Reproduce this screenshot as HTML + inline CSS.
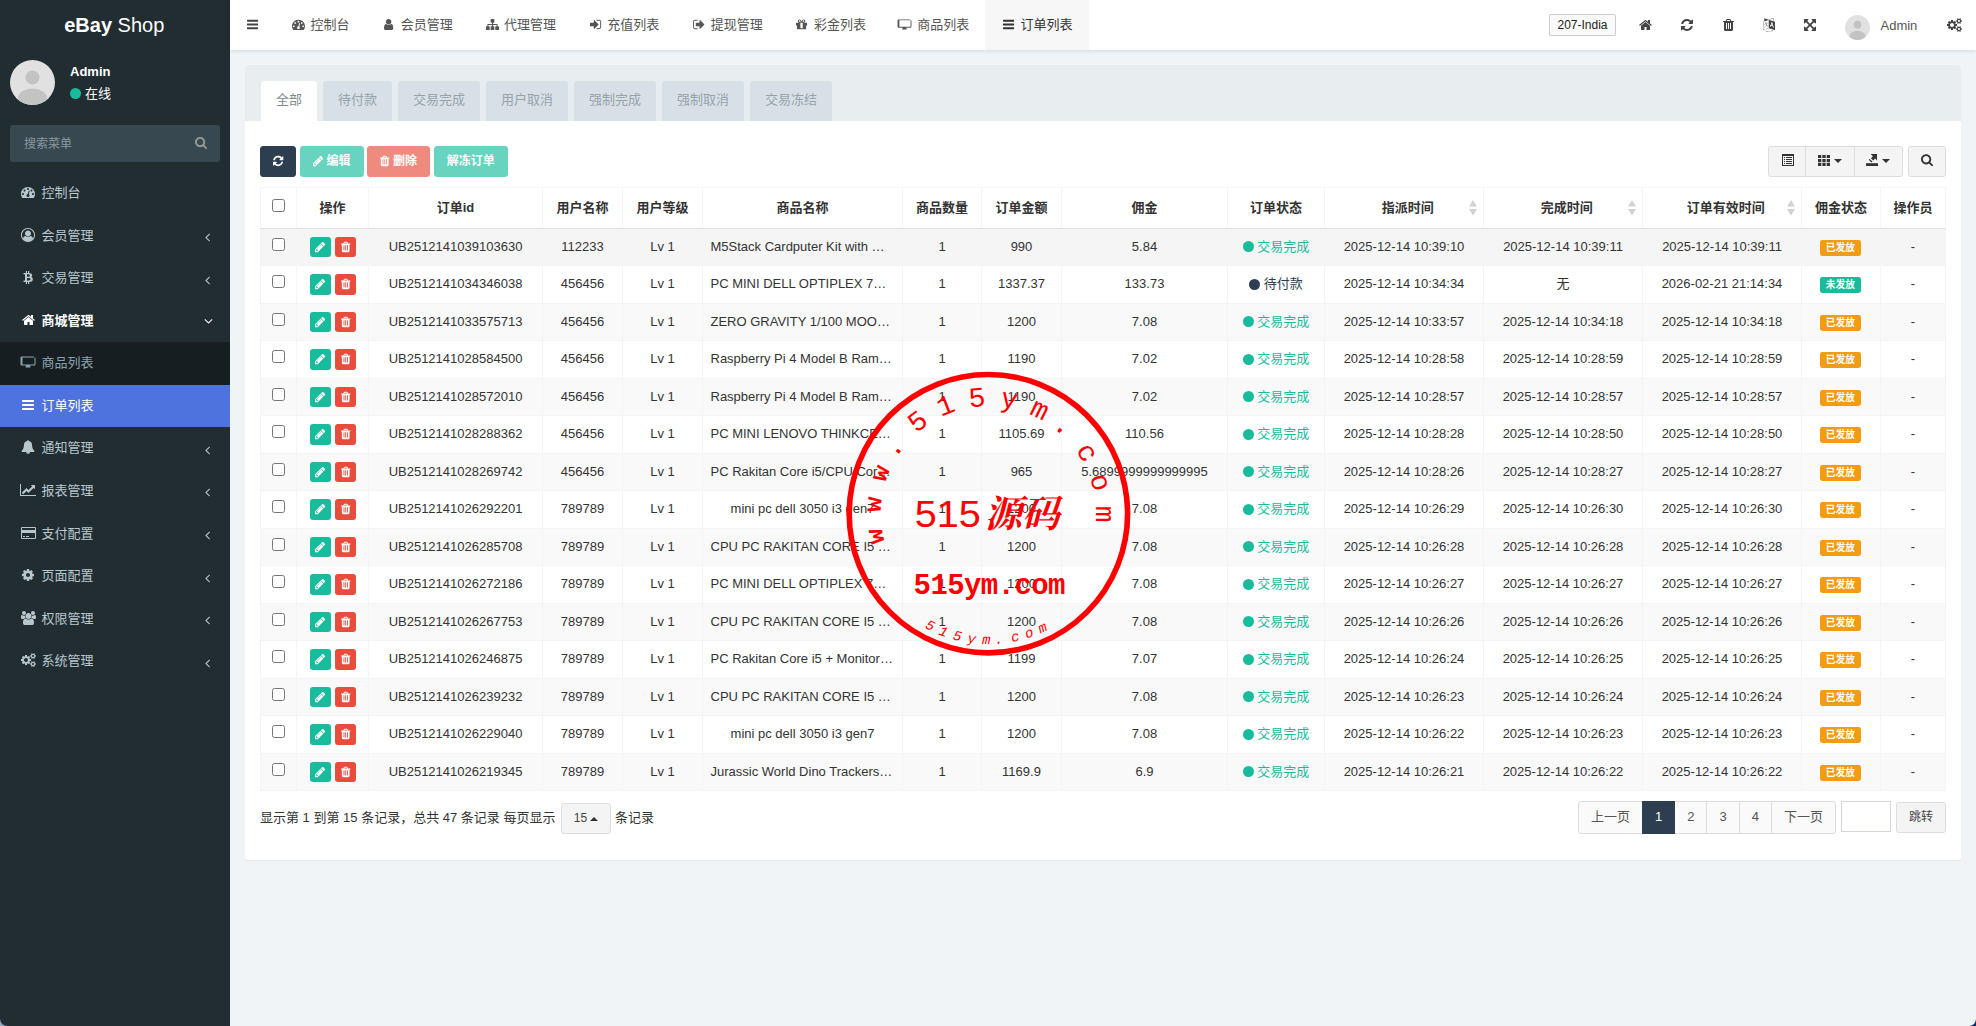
<!DOCTYPE html><html lang="zh-CN"><head><meta charset="utf-8"><title>eBay Shop</title><style>
*{box-sizing:border-box}
html,body{margin:0;padding:0}
body{width:1976px;height:1026px;overflow:hidden;position:relative;background:#f1f4f6;
 font-family:"Liberation Sans","Noto Sans CJK SC",sans-serif;font-size:13px;line-height:1.42857;color:#333}
svg.fa{display:inline-block;vertical-align:-0.1429em;fill:currentColor;overflow:visible}
a{text-decoration:none;color:inherit}
ul{list-style:none;margin:0;padding:0}
/* sidebar */
#side{position:absolute;left:0;top:0;width:230px;height:1026px;background:#222d32;color:#b8c7ce}
#logo{height:50px;line-height:50px;text-align:center;text-indent:-1.5px;font-size:20px;color:#fff;background:#222d32}
#logo b{font-weight:bold}
#upanel{position:absolute;left:0;top:50px;width:230px;height:65px}
#upanel .av{position:absolute;left:10px;top:10px;width:45px;height:45px;border-radius:50%;overflow:hidden}
#upanel .nm{position:absolute;left:70px;top:12.7px;font-weight:bold;color:#fff;font-size:13px;line-height:18px}
#upanel .st{position:absolute;left:70px;top:34.7px;color:#fff;font-size:13px;line-height:18px;white-space:nowrap}
#upanel .st i{display:inline-block;width:11px;height:11px;border-radius:50%;background:#18bc9c;vertical-align:-1px;margin-right:4px}
#sform{position:absolute;left:10px;top:125px;width:210px;height:37px;background:#374850;border-radius:3px;color:#8b979d;font-size:12px;line-height:39px;padding-left:14px}
#sform svg{position:absolute;left:184.5px;top:11px;fill:#999}
#menu{position:absolute;left:0;top:172px;width:230px}
#menu li{position:relative;height:42.57px;line-height:42.57px;white-space:nowrap}
#menu li .ic{position:absolute;left:18px;top:0;width:20px;text-align:center;height:42.57px}
#menu li .ic svg{vertical-align:-2px}
#menu li .tx{position:absolute;left:41.6px;top:0}
#menu li .ar{position:absolute;right:20.5px;top:2.6px}
#menu li.open{color:#fff;font-weight:bold}
#menu li.sub{background:#171e21;color:#8aa4af}
#menu li.act{background:#4e73df;color:#fff}
/* header */
#head{position:absolute;left:230px;top:0;width:1746px;height:50px;background:#fff;box-shadow:0 1px 4px rgba(0,21,41,.12);color:#555}
#head .tg{position:absolute;left:17px;top:0;height:50px;line-height:50px;color:#444}
#tabs{position:absolute;left:45.1px;top:0;height:50px;white-space:nowrap;display:flex}
#tabs a{display:block;height:50px;line-height:50px;padding:0 16px 0 15px;color:#555;white-space:nowrap}
#tabs a .ib{display:inline-block;width:16.71px;text-align:center;margin-right:3.6px}
#tabs a.on{background:#f7f7f7;color:#333}
#head .hi{position:absolute;top:1px;height:50px;line-height:50px;color:#444}
#country{position:absolute;left:1319px;top:14px;width:67px;height:22px;border:1px solid #ccc;border-radius:2px;background:#fafafa;font-size:12px;line-height:20px;text-align:center;color:#222}
#hav{position:absolute;left:1615px;top:15px;width:25px;height:25px;border-radius:50%;overflow:hidden}
#hname{position:absolute;left:1650.5px;top:0.7px;line-height:50px;color:#555}
/* content */
#panel{position:absolute;left:245px;top:65px;width:1716px;height:795px;background:#fff;border-radius:3px;box-shadow:0 1px 1px rgba(0,0,0,.05)}
#phead{position:absolute;left:0;top:0;width:1716px;height:56px;background:#e8edf0;border-radius:3px 3px 0 0}
#ptabs{position:absolute;left:16px;top:16px;display:flex}
#ptabs a{display:block;height:40px;line-height:37px;padding:0 15px;margin-right:6px;background:#d8e0e7;color:#95a3ab;border-radius:3px 3px 0 0;white-space:nowrap}
#ptabs a.on{background:#fff;color:#7b8a8b}
.btn{display:inline-block;border:1px solid transparent;border-radius:3px;padding:6px 12px;font-size:12px;line-height:17.14px;color:#fff;white-space:nowrap;vertical-align:middle}
#tb{position:absolute;left:15px;top:81px;height:31px;white-space:nowrap;font-size:0}
#tb .btn{margin-right:3.7px;height:31.14px;font-weight:bold}
.b-pri{background:#2c3e50;border-color:#2c3e50}
.b-suc{background:#18bc9c;border-color:#18bc9c}
.b-dan{background:#e74c3c;border-color:#e74c3c}
.dis{opacity:.65}
.b-def{background:#f4f4f4;border-color:#ddd;color:#444}
#rt{position:absolute;top:81.3px;left:1523.3px;height:30.3px;width:178px}
.rb{position:absolute;top:0;height:30.3px;background:#f4f4f4;border:1px solid #ddd;border-radius:3px}
.ti{position:absolute;fill:#333;margin:-1px 0 0 -1px}
.rb .caret-dn{margin:-1px 0 0 -1px !important}

#tbl{position:absolute;left:15px;top:122px;width:1686px;border-collapse:separate;border-spacing:0;table-layout:fixed;background:#fff;border-right:1px solid #f4f4f4;border-bottom:1px solid #f4f4f4}
#tbl th,#tbl td{border-left:1px solid #f4f4f4;border-top:1px solid #f4f4f4;text-align:center;padding:0 7.5px;white-space:nowrap;overflow:hidden;vertical-align:middle}
#tbl thead th{height:40.7px;font-weight:bold;color:#333;position:relative}
#tbl tbody tr{height:37.5px}
#tbl tbody td{height:37.5px;color:#333}
#tbl tbody tr:first-child td{border-top-color:#ddd}
#tbl tbody tr:nth-child(odd){background:#f9f9f9}
#tbl tbody tr.hov{background:#f5f5f5}
#tbl th.so{padding-left:15px}
#tbl th.so svg{position:absolute;right:6px;top:12px}
.cb{display:inline-block;width:13px;height:13px;border:1px solid #767676;border-radius:2.5px;background:#fff;vertical-align:middle;position:relative;top:-3px}
.xs{display:inline-block;width:21px;text-align:center;border-radius:3px;padding:0 0 0 1px;height:20.5px;line-height:18.5px;font-size:12px;vertical-align:middle;border:1px solid transparent}
.xs svg{fill:#fff;vertical-align:-2.3px}
.xs+.xs{margin-left:4px}
.dot{display:inline-block;width:11.14px;height:11.14px;border-radius:50%;vertical-align:-1.5px;margin-right:3.6px}
.suc{color:#18bc9c}.suc .dot{background:#18bc9c}
.pri{color:#2c3e50}.pri .dot{background:#2c3e50}
.lab{display:inline-block;font-size:9.75px;font-weight:bold;color:#fff;border-radius:2.4px;width:41px;text-align:center;height:15.7px;line-height:15.7px;vertical-align:middle;position:relative;top:0.6px;left:-0.6px}
.lw{background:#f39c12}.ls{background:#18bc9c}
#tbl td.nm{text-align:left}
#pinfo{position:absolute;left:15px;top:737px;height:32px;line-height:32px;white-space:nowrap;color:#333}
#pinfo .btn{height:30.4px;padding:5.6px 12px;margin:0 4px 0 5.3px;position:relative;top:0}
.caret-up{display:inline-block;width:0;height:0;border-left:4px solid transparent;border-right:4px solid transparent;border-bottom:4px solid #333;vertical-align:1px;margin-left:3px}
.caret-dn{display:inline-block;width:0;height:0;border-left:4px solid transparent;border-right:4px solid transparent;border-top:4px solid #333;vertical-align:2px;margin-left:4px}
#pg{position:absolute;left:1333px;top:736px;display:flex;height:32.57px}
#pg a{display:block;height:32.57px;line-height:30.57px;padding:0 12px;border:1px solid #ddd;margin-left:-1px;background:#fafafa;color:#555}
#pg a:first-child{margin-left:0;border-radius:3px 0 0 3px}
#pg a:last-child{border-radius:0 3px 3px 0}
#pg a.on{background:#2c3e50;border-color:#2c3e50;color:#fff;position:relative;z-index:1}
#jin{position:absolute;left:1596px;top:736.2px;width:50px;height:30.4px;border:1px solid #d2d6de;background:#fff}
#jbt{position:absolute;left:1651px;top:737.2px;width:50px;height:30.4px;border:1px solid #ddd;border-radius:3px;background:#f4f4f4;color:#444;font-size:12px;line-height:28px;text-align:center}
#cbl{position:absolute;left:0;top:1019px;width:7px;height:7px;background:radial-gradient(circle at 7px 0,rgba(140,163,184,0) 6.3px,#8ca3b8 7.3px)}
#cbr{position:absolute;left:1969px;top:1019px;width:7px;height:7px;background:radial-gradient(circle at 0 0,rgba(241,244,246,0) 5.8px,#f4f7fa 6.4px,#0d2b69 7.4px)}
#stamp{position:absolute;left:838px;top:364px;width:300px;height:300px;pointer-events:none}
</style></head><body><div id="side"><div id="logo"><b>eBay</b> Shop</div><div id="upanel"><div class="av"><svg width="45" height="45" viewBox="0 0 45 45"><rect width="45" height="45" fill="#e1e1e1"/><circle cx="22.5" cy="17.5" r="7" fill="#c3c3c3"/><ellipse cx="22.5" cy="38" rx="14.5" ry="9.5" fill="#c3c3c3"/></svg></div><div class="nm">Admin</div><div class="st"><i></i>在线</div></div><div id="sform">搜索菜单<svg class="fa" style="width:12.07px;height:13px;" viewBox="0 -1536 1664 1792"><path transform="scale(1,-1)" d="M1152 704C1152 457 951 256 704 256C457 256 256 457 256 704C256 951 457 1152 704 1152C951 1152 1152 951 1152 704ZM1664 -128C1664 -94 1650 -61 1627 -38L1284 305C1365 422 1408 562 1408 704C1408 1093 1093 1408 704 1408C315 1408 0 1093 0 704C0 315 315 0 704 0C846 0 986 43 1103 124L1446 -218C1469 -242 1502 -256 1536 -256C1606 -256 1664 -198 1664 -128Z"/></svg></div><ul id="menu"><li class=""><span class="ic"><svg class="fa" style="width:14.00px;height:14px;" viewBox="0 -1536 1792 1792"><path transform="scale(1,-1)" d="M384 384C384 313 327 256 256 256C185 256 128 313 128 384C128 455 185 512 256 512C327 512 384 455 384 384ZM576 832C576 761 519 704 448 704C377 704 320 761 320 832C320 903 377 960 448 960C519 960 576 903 576 832ZM1004 351C1069 306 1103 224 1082 143C1055 41 950 -21 847 6C745 33 683 138 710 241C732 322 801 377 880 383L981 765C990 799 1025 820 1059 811C1093 802 1113 767 1105 733ZM1664 384C1664 313 1607 256 1536 256C1465 256 1408 313 1408 384C1408 455 1465 512 1536 512C1607 512 1664 455 1664 384ZM1024 1024C1024 953 967 896 896 896C825 896 768 953 768 1024C768 1095 825 1152 896 1152C967 1152 1024 1095 1024 1024ZM1472 832C1472 761 1415 704 1344 704C1273 704 1216 761 1216 832C1216 903 1273 960 1344 960C1415 960 1472 903 1472 832ZM1792 384C1792 878 1390 1280 896 1280C402 1280 0 878 0 384C0 212 49 45 141 -99C153 -117 173 -128 195 -128H1597C1619 -128 1639 -117 1651 -99C1743 46 1792 212 1792 384Z"/></svg></span><span class="tx">控制台</span></li><li class=""><span class="ic"><svg class="fa" style="width:14.00px;height:14px;" viewBox="0 -1536 1792 1792"><path transform="scale(1,-1)" d="M896 1536C401 1536 0 1135 0 640C0 147 400 -256 896 -256C1393 -256 1792 148 1792 640C1792 1135 1391 1536 896 1536ZM1515 185C1479 364 1392 512 1209 512C1128 433 1018 384 896 384C774 384 664 433 583 512C400 512 313 364 277 185C184 313 128 470 128 640C128 1063 473 1408 896 1408C1319 1408 1664 1063 1664 640C1664 470 1608 313 1515 185ZM1280 832C1280 620 1108 448 896 448C684 448 512 620 512 832C512 1044 684 1216 896 1216C1108 1216 1280 1044 1280 832Z"/></svg></span><span class="tx">会员管理</span><span class="ar"><svg class="fa" style="width:5.00px;height:14px;" viewBox="0 -1536 640 1792"><path transform="scale(1,-1)" d="M627 992C627 1001 623 1009 617 1015L567 1065C561 1071 552 1075 544 1075C536 1075 527 1071 521 1065L55 599C49 593 45 584 45 576C45 568 49 559 55 553L521 87C527 81 536 77 544 77C552 77 561 81 567 87L617 137C623 143 627 152 627 160C627 168 623 177 617 183L224 576L617 969C623 975 627 984 627 992Z"/></svg></span></li><li class=""><span class="ic"><svg class="fa" style="width:10.00px;height:14px;" viewBox="0 -1536 1280 1792"><path transform="scale(1,-1)" d="M1167 896C1150 1078 993 1139 795 1156V1408H641V1163C601 1163 560 1162 519 1161V1408H365V1156C332 1155 299 1155 268 1155L56 1156V992C169 994 167 992 167 992C230 992 250 956 256 924V637C260 637 266 637 272 636C267 636 261 636 256 636V234C253 214 241 183 198 183C198 183 200 181 87 183L56 0H256C293 0 329 -1 365 -1V-256H519V-4C561 -5 602 -5 641 -5V-256H795V-1C1053 13 1233 78 1256 321C1274 516 1182 603 1036 638C1124 683 1180 763 1167 896ZM952 351C952 160 626 182 522 182V520C626 520 952 549 952 351ZM881 827C881 654 609 674 522 674V981C609 981 881 1008 881 827Z"/></svg></span><span class="tx">交易管理</span><span class="ar"><svg class="fa" style="width:5.00px;height:14px;" viewBox="0 -1536 640 1792"><path transform="scale(1,-1)" d="M627 992C627 1001 623 1009 617 1015L567 1065C561 1071 552 1075 544 1075C536 1075 527 1071 521 1065L55 599C49 593 45 584 45 576C45 568 49 559 55 553L521 87C527 81 536 77 544 77C552 77 561 81 567 87L617 137C623 143 627 152 627 160C627 168 623 177 617 183L224 576L617 969C623 975 627 984 627 992Z"/></svg></span></li><li class="open"><span class="ic"><svg class="fa" style="width:13.00px;height:14px;" viewBox="0 -1536 1664 1792"><path transform="scale(1,-1)" d="M1408 544C1408 546 1408 548 1407 550L832 1024L257 550C257 548 256 546 256 544V64C256 29 285 0 320 0H704V384H960V0H1344C1379 0 1408 29 1408 64ZM1631 613C1642 626 1640 647 1627 658L1408 840V1248C1408 1266 1394 1280 1376 1280H1184C1166 1280 1152 1266 1152 1248V1053L908 1257C866 1292 798 1292 756 1257L37 658C24 647 22 626 33 613L95 539C100 533 108 529 116 528C125 527 133 530 140 535L832 1112L1524 535C1530 530 1537 528 1545 528C1546 528 1547 528 1548 528C1556 529 1564 533 1569 539L1631 613Z"/></svg></span><span class="tx">商城管理</span><span class="ar" style="right:17.5px;top:1.6px"><svg class="fa" style="width:9.00px;height:14px;" viewBox="0 -1536 1152 1792"><path transform="scale(1,-1)" d="M1075 800C1075 808 1071 817 1065 823L1015 873C1009 879 1000 883 992 883C984 883 975 879 969 873L576 480L183 873C177 879 168 883 160 883C151 883 143 879 137 873L87 823C81 817 77 808 77 800C77 792 81 783 87 777L553 311C559 305 568 301 576 301C584 301 593 305 599 311L1065 777C1071 783 1075 792 1075 800Z"/></svg></span></li><li class="sub"><span class="ic"><svg class="fa" style="width:15.00px;height:14px;" viewBox="0 -1536 1920 1792"><path transform="translate(0,-1344)" d="M1728 992v-832q0-13-9.5-22.5t-22.5-9.5h-1472q-13 0-22.5 9.5t-9.5 22.5v832q0 13 9.5 22.5t22.5 9.5h1472q13 0 22.5-9.5t9.5-22.5zM1856 160v832q0 66-47 113t-113 47h-544q0 37 16 77.5t32 71 16 43.5q0 26-19 45t-45 19h-512q-26 0-45-19t-19-45q0-14 16-44t32-70 16-78h-544q-66 0-113-47t-47-113v-832q0-66 47-113t113-47h1472q66 0 113 47t47 113z"/></svg></span><span class="tx">商品列表</span></li><li class="act"><span class="ic"><svg class="fa" style="width:12.00px;height:14px;" viewBox="0 -1536 1536 1792"><path transform="scale(1,-1)" d="M1536 192C1536 227 1507 256 1472 256H64C29 256 0 227 0 192V64C0 29 29 0 64 0H1472C1507 0 1536 29 1536 64ZM1536 704C1536 739 1507 768 1472 768H64C29 768 0 739 0 704V576C0 541 29 512 64 512H1472C1507 512 1536 541 1536 576ZM1536 1216C1536 1251 1507 1280 1472 1280H64C29 1280 0 1251 0 1216V1088C0 1053 29 1024 64 1024H1472C1507 1024 1536 1053 1536 1088Z"/></svg></span><span class="tx">订单列表</span></li><li class=""><span class="ic"><svg class="fa" style="width:14.00px;height:14px;" viewBox="0 -1536 1792 1792"><path transform="scale(1,-1)" d="M912 -160C912 -169 905 -176 896 -176C799 -176 720 -97 720 0C720 9 727 16 736 16C745 16 752 9 752 0C752 -79 817 -144 896 -144C905 -144 912 -151 912 -160ZM1728 128C1580 253 1408 477 1408 960C1408 1152 1249 1362 984 1401C989 1413 992 1426 992 1440C992 1493 949 1536 896 1536C843 1536 800 1493 800 1440C800 1426 803 1413 808 1401C543 1362 384 1152 384 960C384 477 212 253 64 128C64 58 122 0 192 0H640C640 -141 755 -256 896 -256C1037 -256 1152 -141 1152 0H1600C1670 0 1728 58 1728 128Z"/></svg></span><span class="tx">通知管理</span><span class="ar"><svg class="fa" style="width:5.00px;height:14px;" viewBox="0 -1536 640 1792"><path transform="scale(1,-1)" d="M627 992C627 1001 623 1009 617 1015L567 1065C561 1071 552 1075 544 1075C536 1075 527 1071 521 1065L55 599C49 593 45 584 45 576C45 568 49 559 55 553L521 87C527 81 536 77 544 77C552 77 561 81 567 87L617 137C623 143 627 152 627 160C627 168 623 177 617 183L224 576L617 969C623 975 627 984 627 992Z"/></svg></span></li><li class=""><span class="ic"><svg class="fa" style="width:16.00px;height:14px;" viewBox="0 -1536 2048 1792"><path transform="scale(1,-1)" d="M2048 0H128V1408H0V-128H2048ZM1920 1248C1920 1266 1906 1280 1888 1280H1453C1425 1280 1410 1246 1431 1225L1552 1104L1088 640L855 873C842 886 822 886 809 873L224 288L416 96L832 512L1065 279C1078 266 1098 266 1111 279L1744 912L1865 791C1886 770 1920 785 1920 813Z"/></svg></span><span class="tx">报表管理</span><span class="ar"><svg class="fa" style="width:5.00px;height:14px;" viewBox="0 -1536 640 1792"><path transform="scale(1,-1)" d="M627 992C627 1001 623 1009 617 1015L567 1065C561 1071 552 1075 544 1075C536 1075 527 1071 521 1065L55 599C49 593 45 584 45 576C45 568 49 559 55 553L521 87C527 81 536 77 544 77C552 77 561 81 567 87L617 137C623 143 627 152 627 160C627 168 623 177 617 183L224 576L617 969C623 975 627 984 627 992Z"/></svg></span></li><li class=""><span class="ic"><svg class="fa" style="width:15.00px;height:14px;" viewBox="0 -1536 1920 1792"><path transform="scale(1,-1)" d="M1760 1408H160C72 1408 0 1336 0 1248V32C0 -56 72 -128 160 -128H1760C1848 -128 1920 -56 1920 32V1248C1920 1336 1848 1408 1760 1408ZM160 1280H1760C1777 1280 1792 1265 1792 1248V1024H128V1248C128 1265 143 1280 160 1280ZM1760 0H160C143 0 128 15 128 32V640H1792V32C1792 15 1777 0 1760 0ZM256 128H512V256H256ZM640 128H1024V256H640Z"/></svg></span><span class="tx">支付配置</span><span class="ar"><svg class="fa" style="width:5.00px;height:14px;" viewBox="0 -1536 640 1792"><path transform="scale(1,-1)" d="M627 992C627 1001 623 1009 617 1015L567 1065C561 1071 552 1075 544 1075C536 1075 527 1071 521 1065L55 599C49 593 45 584 45 576C45 568 49 559 55 553L521 87C527 81 536 77 544 77C552 77 561 81 567 87L617 137C623 143 627 152 627 160C627 168 623 177 617 183L224 576L617 969C623 975 627 984 627 992Z"/></svg></span></li><li class=""><span class="ic"><svg class="fa" style="width:12.00px;height:14px;" viewBox="0 -1536 1536 1792"><path transform="scale(1,-1)" d="M1024 640C1024 499 909 384 768 384C627 384 512 499 512 640C512 781 627 896 768 896C909 896 1024 781 1024 640ZM1536 749C1536 766 1524 782 1507 785L1324 813C1314 846 1300 879 1283 911C1317 958 1354 1002 1388 1048C1393 1055 1396 1062 1396 1071C1396 1079 1394 1087 1389 1093C1347 1152 1277 1214 1224 1263C1217 1269 1208 1273 1199 1273C1190 1273 1181 1270 1175 1264L1033 1157C1004 1172 974 1184 943 1194L915 1378C913 1395 897 1408 879 1408H657C639 1408 625 1396 621 1380C605 1320 599 1255 592 1194C561 1184 530 1171 501 1156L363 1263C355 1269 346 1273 337 1273C303 1273 168 1127 144 1094C139 1087 135 1080 135 1071C135 1062 139 1054 145 1047C182 1002 218 957 252 909C236 879 223 849 213 817L27 789C12 786 0 768 0 753V531C0 514 12 498 29 495L212 468C222 434 236 401 253 369C219 322 182 278 148 232C143 225 140 218 140 209C140 201 142 193 147 186C189 128 259 66 312 18C319 11 328 7 337 7C346 7 355 10 362 16L503 123C532 108 562 96 593 86L621 -98C623 -115 639 -128 657 -128H879C897 -128 911 -116 915 -100C931 -40 937 25 944 86C975 96 1006 109 1035 124L1173 16C1181 11 1190 7 1199 7C1233 7 1368 154 1392 186C1398 193 1401 200 1401 209C1401 218 1397 227 1391 234C1354 279 1318 323 1284 372C1300 401 1312 431 1323 463L1508 491C1524 494 1536 512 1536 527Z"/></svg></span><span class="tx">页面配置</span><span class="ar"><svg class="fa" style="width:5.00px;height:14px;" viewBox="0 -1536 640 1792"><path transform="scale(1,-1)" d="M627 992C627 1001 623 1009 617 1015L567 1065C561 1071 552 1075 544 1075C536 1075 527 1071 521 1065L55 599C49 593 45 584 45 576C45 568 49 559 55 553L521 87C527 81 536 77 544 77C552 77 561 81 567 87L617 137C623 143 627 152 627 160C627 168 623 177 617 183L224 576L617 969C623 975 627 984 627 992Z"/></svg></span></li><li class=""><span class="ic"><svg class="fa" style="width:15.00px;height:14px;" viewBox="0 -1536 1920 1792"><path transform="scale(1,-1)" d="M593 640C541 715 512 805 512 896C512 918 514 940 517 962C474 947 430 939 384 939C249 939 145 1024 124 1024C-3 1024 0 752 0 671C0 560 94 512 194 512H328C395 592 489 637 593 640ZM1664 3C1664 229 1611 576 1318 576C1284 576 1160 437 960 437C760 437 636 576 602 576C309 576 256 229 256 3C256 -159 363 -256 523 -256H1397C1557 -256 1664 -159 1664 3ZM640 1280C640 1421 525 1536 384 1536C243 1536 128 1421 128 1280C128 1139 243 1024 384 1024C525 1024 640 1139 640 1280ZM1344 896C1344 1108 1172 1280 960 1280C748 1280 576 1108 576 896C576 684 748 512 960 512C1172 512 1344 684 1344 896ZM1920 671C1920 752 1923 1024 1796 1024C1775 1024 1671 939 1536 939C1490 939 1446 947 1403 962C1406 940 1408 918 1408 896C1408 805 1379 715 1327 640C1431 637 1525 592 1592 512H1726C1826 512 1920 560 1920 671ZM1792 1280C1792 1421 1677 1536 1536 1536C1395 1536 1280 1421 1280 1280C1280 1139 1395 1024 1536 1024C1677 1024 1792 1139 1792 1280Z"/></svg></span><span class="tx">权限管理</span><span class="ar"><svg class="fa" style="width:5.00px;height:14px;" viewBox="0 -1536 640 1792"><path transform="scale(1,-1)" d="M627 992C627 1001 623 1009 617 1015L567 1065C561 1071 552 1075 544 1075C536 1075 527 1071 521 1065L55 599C49 593 45 584 45 576C45 568 49 559 55 553L521 87C527 81 536 77 544 77C552 77 561 81 567 87L617 137C623 143 627 152 627 160C627 168 623 177 617 183L224 576L617 969C623 975 627 984 627 992Z"/></svg></span></li><li class=""><span class="ic"><svg class="fa" style="width:15.00px;height:14px;" viewBox="0 -1536 1920 1792"><path transform="scale(1,-1)" d="M896 640C896 499 781 384 640 384C499 384 384 499 384 640C384 781 499 896 640 896C781 896 896 781 896 640ZM1664 128C1664 58 1607 0 1536 0C1466 0 1408 57 1408 128C1408 198 1466 256 1536 256C1606 256 1664 198 1664 128ZM1664 1152C1664 1082 1607 1024 1536 1024C1466 1024 1408 1081 1408 1152C1408 1222 1466 1280 1536 1280C1606 1280 1664 1222 1664 1152ZM1280 731C1280 745 1270 758 1256 761L1104 784C1095 812 1083 839 1070 866C1098 905 1128 941 1157 980C1161 986 1164 992 1164 999C1164 1027 1046 1135 1020 1159C1014 1164 1007 1167 999 1167C992 1167 985 1165 979 1160L861 1071C837 1083 812 1094 786 1102L763 1255C761 1269 747 1280 733 1280H547C533 1280 521 1270 517 1256C504 1207 499 1152 494 1102C467 1093 442 1083 417 1070L302 1160C296 1164 289 1167 281 1167C252 1167 140 1046 120 1019C115 1013 113 1006 113 999C113 992 116 985 120 979C152 941 182 904 210 864C197 839 186 814 178 788L23 764C10 762 0 747 0 734V549C0 535 10 522 24 520L176 496C185 468 197 441 211 414C182 375 152 338 123 300C119 294 116 288 116 281C116 252 234 145 260 121C266 116 273 113 281 113C288 113 296 115 301 120L419 209C443 197 468 186 494 178L517 25C519 11 533 0 547 0H733C747 0 759 10 763 24C776 73 781 128 786 179C813 187 838 197 863 210L978 120C984 116 991 113 999 113C1028 113 1140 235 1160 262C1165 267 1167 274 1167 281C1167 289 1164 295 1160 301C1128 339 1098 376 1070 416C1083 441 1094 466 1102 492L1257 516C1270 518 1280 533 1280 546ZM1920 198C1920 213 1791 227 1771 229C1763 247 1753 265 1741 281C1750 301 1792 401 1792 419C1792 421 1791 424 1788 426C1776 433 1669 496 1664 496L1658 494C1624 460 1594 421 1566 382C1556 383 1546 384 1536 384C1526 384 1516 383 1506 382C1496 397 1421 496 1408 496C1403 496 1296 432 1284 426C1281 424 1280 421 1280 419C1280 402 1322 301 1331 281C1319 265 1309 247 1301 229C1281 227 1152 213 1152 198V58C1152 43 1281 29 1301 27C1309 8 1319 -9 1331 -25C1322 -45 1280 -146 1280 -163C1280 -165 1281 -168 1284 -170C1296 -177 1403 -241 1408 -241C1421 -241 1496 -141 1506 -126C1516 -127 1526 -128 1536 -128C1546 -128 1556 -127 1566 -126C1576 -141 1651 -241 1664 -241C1669 -241 1776 -177 1788 -170C1791 -168 1792 -166 1792 -163C1792 -145 1750 -45 1741 -25C1753 -9 1763 8 1771 27C1791 29 1920 43 1920 58ZM1920 1222C1920 1237 1791 1251 1771 1253C1763 1271 1753 1289 1741 1305C1750 1325 1792 1425 1792 1443C1792 1445 1791 1448 1788 1450C1776 1457 1669 1520 1664 1520L1658 1518C1624 1484 1594 1445 1566 1406C1556 1407 1546 1408 1536 1408C1526 1408 1516 1407 1506 1406C1496 1421 1421 1520 1408 1520C1403 1520 1296 1456 1284 1450C1281 1448 1280 1445 1280 1443C1280 1426 1322 1325 1331 1305C1319 1289 1309 1271 1301 1253C1281 1251 1152 1237 1152 1222V1082C1152 1067 1281 1053 1301 1051C1309 1032 1319 1015 1331 999C1322 979 1280 878 1280 861C1280 859 1281 856 1284 854C1296 847 1403 783 1408 783C1421 783 1496 883 1506 898C1516 897 1526 896 1536 896C1546 896 1556 897 1566 898C1576 883 1651 783 1664 783C1669 783 1776 847 1788 854C1791 856 1792 858 1792 861C1792 879 1750 979 1741 999C1753 1015 1763 1032 1771 1051C1791 1053 1920 1067 1920 1082Z"/></svg></span><span class="tx">系统管理</span><span class="ar"><svg class="fa" style="width:5.00px;height:14px;" viewBox="0 -1536 640 1792"><path transform="scale(1,-1)" d="M627 992C627 1001 623 1009 617 1015L567 1065C561 1071 552 1075 544 1075C536 1075 527 1071 521 1065L55 599C49 593 45 584 45 576C45 568 49 559 55 553L521 87C527 81 536 77 544 77C552 77 561 81 567 87L617 137C623 143 627 152 627 160C627 168 623 177 617 183L224 576L617 969C623 975 627 984 627 992Z"/></svg></span></li></ul></div><div id="head"><span class="tg"><svg class="fa" style="width:11.14px;height:13px;" viewBox="0 -1536 1536 1792"><path transform="scale(1,-1)" d="M1536 192C1536 227 1507 256 1472 256H64C29 256 0 227 0 192V64C0 29 29 0 64 0H1472C1507 0 1536 29 1536 64ZM1536 704C1536 739 1507 768 1472 768H64C29 768 0 739 0 704V576C0 541 29 512 64 512H1472C1507 512 1536 541 1536 576ZM1536 1216C1536 1251 1507 1280 1472 1280H64C29 1280 0 1251 0 1216V1088C0 1053 29 1024 64 1024H1472C1507 1024 1536 1053 1536 1088Z"/></svg></span><div id="tabs"><a><span class="ib"><svg class="fa" style="width:13.00px;height:13px;" viewBox="0 -1536 1792 1792"><path transform="scale(1,-1)" d="M384 384C384 313 327 256 256 256C185 256 128 313 128 384C128 455 185 512 256 512C327 512 384 455 384 384ZM576 832C576 761 519 704 448 704C377 704 320 761 320 832C320 903 377 960 448 960C519 960 576 903 576 832ZM1004 351C1069 306 1103 224 1082 143C1055 41 950 -21 847 6C745 33 683 138 710 241C732 322 801 377 880 383L981 765C990 799 1025 820 1059 811C1093 802 1113 767 1105 733ZM1664 384C1664 313 1607 256 1536 256C1465 256 1408 313 1408 384C1408 455 1465 512 1536 512C1607 512 1664 455 1664 384ZM1024 1024C1024 953 967 896 896 896C825 896 768 953 768 1024C768 1095 825 1152 896 1152C967 1152 1024 1095 1024 1024ZM1472 832C1472 761 1415 704 1344 704C1273 704 1216 761 1216 832C1216 903 1273 960 1344 960C1415 960 1472 903 1472 832ZM1792 384C1792 878 1390 1280 896 1280C402 1280 0 878 0 384C0 212 49 45 141 -99C153 -117 173 -128 195 -128H1597C1619 -128 1639 -117 1651 -99C1743 46 1792 212 1792 384Z"/></svg></span>控制台</a><a><span class="ib"><svg class="fa" style="width:9.29px;height:13px;" viewBox="0 -1536 1280 1792"><path transform="scale(1,-1)" d="M1280 137C1280 400 1215 704 953 704C872 625 762 576 640 576C518 576 408 625 327 704C65 704 0 400 0 137C0 -9 96 -128 213 -128H1067C1184 -128 1280 -9 1280 137ZM1024 1024C1024 1236 852 1408 640 1408C428 1408 256 1236 256 1024C256 812 428 640 640 640C852 640 1024 812 1024 1024Z"/></svg></span>会员管理</a><a><span class="ib"><svg class="fa" style="width:13.00px;height:13px;" viewBox="0 -1536 1792 1792"><path transform="scale(1,-1)" d="M1792 288C1792 341 1749 384 1696 384H1600V576C1600 646 1542 704 1472 704H960V896H1056C1109 896 1152 939 1152 992V1312C1152 1365 1109 1408 1056 1408H736C683 1408 640 1365 640 1312V992C640 939 683 896 736 896H832V704H320C250 704 192 646 192 576V384H96C43 384 0 341 0 288V-32C0 -85 43 -128 96 -128H416C469 -128 512 -85 512 -32V288C512 341 469 384 416 384H320V576H832V384H736C683 384 640 341 640 288V-32C640 -85 683 -128 736 -128H1056C1109 -128 1152 -85 1152 -32V288C1152 341 1109 384 1056 384H960V576H1472V384H1376C1323 384 1280 341 1280 288V-32C1280 -85 1323 -128 1376 -128H1696C1749 -128 1792 -85 1792 -32Z"/></svg></span>代理管理</a><a><span class="ib"><svg class="fa" style="width:11.14px;height:13px;" viewBox="0 -1536 1536 1792"><path transform="scale(1,-1)" d="M1184 640C1184 657 1177 673 1165 685L621 1229C609 1241 593 1248 576 1248C541 1248 512 1219 512 1184V896H64C29 896 0 867 0 832V448C0 413 29 384 64 384H512V96C512 61 541 32 576 32C593 32 609 39 621 51L1165 595C1177 607 1184 623 1184 640ZM1536 992C1536 1151 1407 1280 1248 1280H928C883 1280 896 1212 896 1184C896 1147 935 1152 960 1152H1248C1336 1152 1408 1080 1408 992V288C1408 200 1336 128 1248 128H928C883 128 896 60 896 32C896 15 911 0 928 0H1248C1407 0 1536 129 1536 288Z"/></svg></span>充值列表</a><a><span class="ib"><svg class="fa" style="width:12.07px;height:13px;" viewBox="0 -1536 1664 1792"><path transform="scale(1,-1)" d="M640 96C640 133 601 128 576 128H288C200 128 128 200 128 288V992C128 1080 200 1152 288 1152H608C653 1152 640 1220 640 1248C640 1265 625 1280 608 1280H288C129 1280 0 1151 0 992V288C0 129 129 0 288 0H608C653 0 640 68 640 96ZM1568 640C1568 657 1561 673 1549 685L1005 1229C993 1241 977 1248 960 1248C925 1248 896 1219 896 1184V896H448C413 896 384 867 384 832V448C384 413 413 384 448 384H896V96C896 61 925 32 960 32C977 32 993 39 1005 51L1549 595C1561 607 1568 623 1568 640Z"/></svg></span>提现管理</a><a><span class="ib"><svg class="fa" style="width:11.14px;height:13px;" viewBox="0 -1536 1536 1792"><path transform="scale(1,-1)" d="M928 180C928 145 899 128 864 128H672C637 128 608 145 608 180V236V704V896H928V704V236V180ZM472 1024C419 1024 376 1067 376 1120C376 1173 419 1216 472 1216C506 1216 530 1198 541 1185L667 1024ZM1160 1120C1160 1067 1117 1024 1064 1024H870L995 1185C1006 1198 1030 1216 1064 1216C1117 1216 1160 1173 1160 1120ZM1536 864C1536 882 1522 896 1504 896H1064C1188 896 1288 996 1288 1120C1288 1244 1188 1344 1064 1344C997 1344 935 1316 896 1267L768 1102L640 1267C601 1316 539 1344 472 1344C348 1344 248 1244 248 1120C248 996 348 896 472 896H32C14 896 0 882 0 864V544C0 526 14 512 32 512H128V96C128 43 171 0 224 0H1312C1365 0 1408 43 1408 96V512H1504C1522 512 1536 526 1536 544Z"/></svg></span>彩金列表</a><a><span class="ib"><svg class="fa" style="width:13.93px;height:13px;" viewBox="0 -1536 1920 1792"><path transform="translate(0,-1344)" d="M1728 992v-832q0-13-9.5-22.5t-22.5-9.5h-1472q-13 0-22.5 9.5t-9.5 22.5v832q0 13 9.5 22.5t22.5 9.5h1472q13 0 22.5-9.5t9.5-22.5zM1856 160v832q0 66-47 113t-113 47h-544q0 37 16 77.5t32 71 16 43.5q0 26-19 45t-45 19h-512q-26 0-45-19t-19-45q0-14 16-44t32-70 16-78h-544q-66 0-113-47t-47-113v-832q0-66 47-113t113-47h1472q66 0 113 47t47 113z"/></svg></span>商品列表</a><a class="on"><span class="ib"><svg class="fa" style="width:11.14px;height:13px;" viewBox="0 -1536 1536 1792"><path transform="scale(1,-1)" d="M1536 192C1536 227 1507 256 1472 256H64C29 256 0 227 0 192V64C0 29 29 0 64 0H1472C1507 0 1536 29 1536 64ZM1536 704C1536 739 1507 768 1472 768H64C29 768 0 739 0 704V576C0 541 29 512 64 512H1472C1507 512 1536 541 1536 576ZM1536 1216C1536 1251 1507 1280 1472 1280H64C29 1280 0 1251 0 1216V1088C0 1053 29 1024 64 1024H1472C1507 1024 1536 1053 1536 1088Z"/></svg></span>订单列表</a></div><div id="country">207-India</div><span class="hi" style="left:1408.9px"><svg class="fa" style="width:13.00px;height:14px;" viewBox="0 -1536 1664 1792"><path transform="scale(1,-1)" d="M1408 544C1408 546 1408 548 1407 550L832 1024L257 550C257 548 256 546 256 544V64C256 29 285 0 320 0H704V384H960V0H1344C1379 0 1408 29 1408 64ZM1631 613C1642 626 1640 647 1627 658L1408 840V1248C1408 1266 1394 1280 1376 1280H1184C1166 1280 1152 1266 1152 1248V1053L908 1257C866 1292 798 1292 756 1257L37 658C24 647 22 626 33 613L95 539C100 533 108 529 116 528C125 527 133 530 140 535L832 1112L1524 535C1530 530 1537 528 1545 528C1546 528 1547 528 1548 528C1556 529 1564 533 1569 539L1631 613Z"/></svg></span><span class="hi" style="left:1451.1px"><svg class="fa" style="width:12.00px;height:14px;" viewBox="0 -1536 1536 1792"><path transform="scale(1,-1)" d="M1511 480C1511 497 1497 512 1479 512H1287C1272 512 1262 503 1257 489C1240 449 1228 411 1204 372C1111 220 946 128 768 128C639 128 514 178 420 266L557 403C569 415 576 431 576 448C576 483 547 512 512 512H64C29 512 0 483 0 448V0C0 -35 29 -64 64 -64C81 -64 97 -57 109 -45L238 84C380 -51 569 -128 764 -128C1133 -128 1425 119 1510 473C1511 475 1511 478 1511 480ZM1536 1280C1536 1315 1507 1344 1472 1344C1455 1344 1439 1337 1427 1325L1297 1196C1155 1330 964 1408 768 1408C399 1408 104 1162 18 807C18 805 18 802 18 800C18 783 32 768 50 768H249C264 768 274 777 279 791C296 831 308 869 332 908C425 1060 590 1152 768 1152C897 1152 1022 1103 1117 1015L979 877C967 865 960 849 960 832C960 797 989 768 1024 768H1472C1507 768 1536 797 1536 832Z"/></svg></span><span class="hi" style="left:1492.9px"><svg class="fa" style="width:11.00px;height:14px;" viewBox="0 -1536 1408 1792"><path transform="scale(1,-1)" d="M512 160C512 142 498 128 480 128H416C398 128 384 142 384 160V864C384 882 398 896 416 896H480C498 896 512 882 512 864V160ZM768 160C768 142 754 128 736 128H672C654 128 640 142 640 160V864C640 882 654 896 672 896H736C754 896 768 882 768 864V160ZM1024 160C1024 142 1010 128 992 128H928C910 128 896 142 896 160V864C896 882 910 896 928 896H992C1010 896 1024 882 1024 864V160ZM480 1152 529 1269C532 1273 540 1279 546 1280H863C868 1279 877 1273 880 1269L928 1152ZM1408 1120C1408 1138 1394 1152 1376 1152H1067L997 1319C977 1368 917 1408 864 1408H544C491 1408 431 1368 411 1319L341 1152H32C14 1152 0 1138 0 1120V1056C0 1038 14 1024 32 1024H128V72C128 -38 200 -128 288 -128H1120C1208 -128 1280 -34 1280 76V1024H1376C1394 1024 1408 1038 1408 1056Z"/></svg></span><span class="hi" style="left:1532.6px"><svg class="fa" style="width:12.00px;height:14px;" viewBox="0 -1536 1536 1792"><path transform="scale(1,-1)" d="M654 458C656 466 645 512 639 514C633 516 514 566 497 574C483 581 449 595 433 602C478 672 506 725 510 733C517 748 565 842 566 847C567 853 568 875 567 880C566 885 549 875 525 867C501 859 456 829 438 826C421 822 365 801 336 791C307 781 253 765 231 759C209 753 189 752 177 748C178 731 182 725 182 725C185 720 197 707 210 704C224 700 247 701 257 704C268 706 286 715 288 719C290 723 287 735 291 739C295 742 350 755 370 761C391 768 470 795 480 794C477 782 414 656 393 618C373 580 254 414 229 385C209 362 163 305 147 293C151 291 180 294 185 297C218 318 272 386 290 407C342 468 388 533 424 588C431 585 488 538 503 528C518 518 577 485 590 479C603 474 652 451 654 458ZM449 944C446 957 438 961 428 961C418 960 388 952 373 947C359 943 328 934 315 931C302 928 273 932 269 936C265 940 274 905 286 892C308 870 326 867 335 866C355 866 380 872 395 878C410 884 435 897 445 916C447 920 452 927 449 944ZM1147 815 1071 630 1210 588ZM39 15V1046L733 1279V247ZM1280 332 1243 467 1032 532 987 422 885 453 1101 989 1201 958 1382 301ZM777 1294 1350 1490V1110ZM1088 -29 1131 -102C1100 -119 1071 -138 1038 -153C924 -202 839 -218 714 -218C613 -218 487 -177 397 -132C384 -126 337 -97 328 -97C318 -97 310 -105 310 -116C310 -123 312 -127 318 -132C402 -193 595 -256 701 -256H785C814 -256 847 -250 876 -244C971 -228 1071 -188 1152 -136L1192 -202L1246 -42ZM1536 1050 1389 1097V1515C1389 1528 1380 1536 1369 1536C1360 1536 738 1321 731 1319L173 1517V1133C88 1104 27 1084 24 1083C18 1081 10 1079 4 1072C2 1070 1 1065 0 1062V-16C0 -17 1 -18 1 -19C4 -27 11 -32 19 -32C29 -32 746 210 762 217C762 217 763 217 1536 -29Z"/></svg></span><span class="hi" style="left:1573.8px"><svg class="fa" style="width:12.00px;height:14px;" viewBox="0 -1536 1536 1792"><path transform="scale(1,-1)" d="M1283 995 1427 851C1439 839 1455 832 1472 832C1480 832 1489 834 1497 837C1520 847 1536 870 1536 896V1344C1536 1379 1507 1408 1472 1408H1024C998 1408 975 1392 965 1368C955 1345 960 1317 979 1299L1123 1155L768 800L413 1155L557 1299C576 1317 581 1345 571 1368C561 1392 538 1408 512 1408H64C29 1408 0 1379 0 1344V896C0 870 16 847 40 837C47 834 56 832 64 832C81 832 97 839 109 851L253 995L608 640L253 285L109 429C91 448 63 453 40 443C16 433 0 410 0 384V-64C0 -99 29 -128 64 -128H512C538 -128 561 -112 571 -88C581 -65 576 -37 557 -19L413 125L768 480L1123 125L979 -19C960 -37 955 -65 965 -88C975 -112 998 -128 1024 -128H1472C1507 -128 1536 -99 1536 -64V384C1536 410 1520 433 1497 443C1473 453 1445 448 1427 429L1283 285L928 640Z"/></svg></span><span class="hi" style="left:1716.7px"><svg class="fa" style="width:15.00px;height:14px;" viewBox="0 -1536 1920 1792"><path transform="scale(1,-1)" d="M896 640C896 499 781 384 640 384C499 384 384 499 384 640C384 781 499 896 640 896C781 896 896 781 896 640ZM1664 128C1664 58 1607 0 1536 0C1466 0 1408 57 1408 128C1408 198 1466 256 1536 256C1606 256 1664 198 1664 128ZM1664 1152C1664 1082 1607 1024 1536 1024C1466 1024 1408 1081 1408 1152C1408 1222 1466 1280 1536 1280C1606 1280 1664 1222 1664 1152ZM1280 731C1280 745 1270 758 1256 761L1104 784C1095 812 1083 839 1070 866C1098 905 1128 941 1157 980C1161 986 1164 992 1164 999C1164 1027 1046 1135 1020 1159C1014 1164 1007 1167 999 1167C992 1167 985 1165 979 1160L861 1071C837 1083 812 1094 786 1102L763 1255C761 1269 747 1280 733 1280H547C533 1280 521 1270 517 1256C504 1207 499 1152 494 1102C467 1093 442 1083 417 1070L302 1160C296 1164 289 1167 281 1167C252 1167 140 1046 120 1019C115 1013 113 1006 113 999C113 992 116 985 120 979C152 941 182 904 210 864C197 839 186 814 178 788L23 764C10 762 0 747 0 734V549C0 535 10 522 24 520L176 496C185 468 197 441 211 414C182 375 152 338 123 300C119 294 116 288 116 281C116 252 234 145 260 121C266 116 273 113 281 113C288 113 296 115 301 120L419 209C443 197 468 186 494 178L517 25C519 11 533 0 547 0H733C747 0 759 10 763 24C776 73 781 128 786 179C813 187 838 197 863 210L978 120C984 116 991 113 999 113C1028 113 1140 235 1160 262C1165 267 1167 274 1167 281C1167 289 1164 295 1160 301C1128 339 1098 376 1070 416C1083 441 1094 466 1102 492L1257 516C1270 518 1280 533 1280 546ZM1920 198C1920 213 1791 227 1771 229C1763 247 1753 265 1741 281C1750 301 1792 401 1792 419C1792 421 1791 424 1788 426C1776 433 1669 496 1664 496L1658 494C1624 460 1594 421 1566 382C1556 383 1546 384 1536 384C1526 384 1516 383 1506 382C1496 397 1421 496 1408 496C1403 496 1296 432 1284 426C1281 424 1280 421 1280 419C1280 402 1322 301 1331 281C1319 265 1309 247 1301 229C1281 227 1152 213 1152 198V58C1152 43 1281 29 1301 27C1309 8 1319 -9 1331 -25C1322 -45 1280 -146 1280 -163C1280 -165 1281 -168 1284 -170C1296 -177 1403 -241 1408 -241C1421 -241 1496 -141 1506 -126C1516 -127 1526 -128 1536 -128C1546 -128 1556 -127 1566 -126C1576 -141 1651 -241 1664 -241C1669 -241 1776 -177 1788 -170C1791 -168 1792 -166 1792 -163C1792 -145 1750 -45 1741 -25C1753 -9 1763 8 1771 27C1791 29 1920 43 1920 58ZM1920 1222C1920 1237 1791 1251 1771 1253C1763 1271 1753 1289 1741 1305C1750 1325 1792 1425 1792 1443C1792 1445 1791 1448 1788 1450C1776 1457 1669 1520 1664 1520L1658 1518C1624 1484 1594 1445 1566 1406C1556 1407 1546 1408 1536 1408C1526 1408 1516 1407 1506 1406C1496 1421 1421 1520 1408 1520C1403 1520 1296 1456 1284 1450C1281 1448 1280 1445 1280 1443C1280 1426 1322 1325 1331 1305C1319 1289 1309 1271 1301 1253C1281 1251 1152 1237 1152 1222V1082C1152 1067 1281 1053 1301 1051C1309 1032 1319 1015 1331 999C1322 979 1280 878 1280 861C1280 859 1281 856 1284 854C1296 847 1403 783 1408 783C1421 783 1496 883 1506 898C1516 897 1526 896 1536 896C1546 896 1556 897 1566 898C1576 883 1651 783 1664 783C1669 783 1776 847 1788 854C1791 856 1792 858 1792 861C1792 879 1750 979 1741 999C1753 1015 1763 1032 1771 1051C1791 1053 1920 1067 1920 1082Z"/></svg></span><div id="hav"><svg width="25" height="25" viewBox="0 0 45 45"><rect width="45" height="45" fill="#e1e1e1"/><circle cx="22.5" cy="17.5" r="7" fill="#c3c3c3"/><ellipse cx="22.5" cy="38" rx="14.5" ry="9.5" fill="#c3c3c3"/></svg></div><div id="hname">Admin</div></div><div id="panel"><div id="phead"><div id="ptabs"><a class="on">全部</a><a>待付款</a><a>交易完成</a><a>用户取消</a><a>强制完成</a><a>强制取消</a><a>交易冻结</a></div></div><div id="tb"><span class="btn b-pri"><svg class="fa" style="width:10.29px;height:12px;" viewBox="0 -1536 1536 1792"><path transform="scale(1,-1)" d="M1511 480C1511 497 1497 512 1479 512H1287C1272 512 1262 503 1257 489C1240 449 1228 411 1204 372C1111 220 946 128 768 128C639 128 514 178 420 266L557 403C569 415 576 431 576 448C576 483 547 512 512 512H64C29 512 0 483 0 448V0C0 -35 29 -64 64 -64C81 -64 97 -57 109 -45L238 84C380 -51 569 -128 764 -128C1133 -128 1425 119 1510 473C1511 475 1511 478 1511 480ZM1536 1280C1536 1315 1507 1344 1472 1344C1455 1344 1439 1337 1427 1325L1297 1196C1155 1330 964 1408 768 1408C399 1408 104 1162 18 807C18 805 18 802 18 800C18 783 32 768 50 768H249C264 768 274 777 279 791C296 831 308 869 332 908C425 1060 590 1152 768 1152C897 1152 1022 1103 1117 1015L979 877C967 865 960 849 960 832C960 797 989 768 1024 768H1472C1507 768 1536 797 1536 832Z"/></svg></span><span class="btn b-suc dis"><svg class="fa" style="width:10.29px;height:12px;" viewBox="0 -1536 1536 1792"><path transform="scale(1,-1)" d="M363 0H256V128H128V235L219 326L454 91ZM886 928C886 922 884 916 879 911L337 369C332 364 326 362 320 362C307 362 298 371 298 384C298 390 300 396 305 401L847 943C852 948 858 950 864 950C877 950 886 941 886 928ZM832 1120 0 288V-128H416L1248 704ZM1515 1024C1515 1058 1501 1091 1478 1115L1243 1349C1219 1373 1186 1387 1152 1387C1118 1387 1085 1373 1062 1349L896 1184L1312 768L1478 934C1501 957 1515 990 1515 1024Z"/></svg><span style="display:inline-block;width:3.33px"></span>编辑</span><span class="btn b-dan dis"><svg class="fa" style="width:9.43px;height:12px;" viewBox="0 -1536 1408 1792"><path transform="scale(1,-1)" d="M512 160C512 142 498 128 480 128H416C398 128 384 142 384 160V864C384 882 398 896 416 896H480C498 896 512 882 512 864V160ZM768 160C768 142 754 128 736 128H672C654 128 640 142 640 160V864C640 882 654 896 672 896H736C754 896 768 882 768 864V160ZM1024 160C1024 142 1010 128 992 128H928C910 128 896 142 896 160V864C896 882 910 896 928 896H992C1010 896 1024 882 1024 864V160ZM480 1152 529 1269C532 1273 540 1279 546 1280H863C868 1279 877 1273 880 1269L928 1152ZM1408 1120C1408 1138 1394 1152 1376 1152H1067L997 1319C977 1368 917 1408 864 1408H544C491 1408 431 1368 411 1319L341 1152H32C14 1152 0 1138 0 1120V1056C0 1038 14 1024 32 1024H128V72C128 -38 200 -128 288 -128H1120C1208 -128 1280 -34 1280 76V1024H1376C1394 1024 1408 1038 1408 1056Z"/></svg><span style="display:inline-block;width:3.33px"></span>删除</span><span class="btn b-suc dis">解冻订单</span></div><div id="rt"><span class="rb" style="left:0;width:37.5px;border-radius:3px 0 0 3px"><svg class="ti" style="left:13.7px;top:7.7px" width="12" height="12" viewBox="0 0 12 12"><path fill-rule="evenodd" d="M0 0h12v12H0zM1 2v9h10V2z"/><path d="M2 3h1v1H2zM4 3h6v1H4zM2 5h1v1H2zM4 5h6v1H4zM2 7h1v1H2zM4 7h6v1H4zM2 9h1v1H2zM4 9h6v1H4z"/></svg></span><span class="rb" style="left:36.5px;width:50.2px;border-radius:0"><svg class="ti" style="left:13.2px;top:8.7px" width="12" height="11.2" viewBox="0 0 12 11.2"><path d="M0 0h3.3v3.1h-3.3zM4.35 0h3.3v3.1h-3.3zM8.7 0h3.3v3.1h-3.3zM0 4.05h3.3v3.1h-3.3zM4.35 4.05h3.3v3.1h-3.3zM8.7 4.05h3.3v3.1h-3.3zM0 8.1h3.3v3.1h-3.3zM4.35 8.1h3.3v3.1h-3.3zM8.7 8.1h3.3v3.1h-3.3z"/></svg><i class="caret-dn" style="position:absolute;left:29.4px;top:12.6px;margin:0"></i></span><span class="rb" style="left:85.7px;width:49.4px;border-radius:0 3px 3px 0"><svg class="ti" style="left:12px;top:7.7px" width="12" height="12.4" viewBox="0 0 12 12.4"><path d="M0 9.2h12v3H0z"/><path d="M4.7 0H11v6.4L9.1 4.5 7.2 6.4 5 4.2l1.9-1.9z"/><path d="M3.6 4.9l2.9 2.7-1 1-2.8-2.8z"/></svg><i class="caret-dn" style="position:absolute;left:28.4px;top:12.6px;margin:0"></i></span><span class="rb" style="left:139.7px;width:37.8px"><svg class="ti" style="left:13px;top:7.5px" width="12.1" height="12.4" viewBox="0 -1408 1664 1664"><path transform="scale(1,-1)" d="M1152 704C1152 457 951 256 704 256C457 256 256 457 256 704C256 951 457 1152 704 1152C951 1152 1152 951 1152 704ZM1664 -128C1664 -94 1650 -61 1627 -38L1284 305C1365 422 1408 562 1408 704C1408 1093 1093 1408 704 1408C315 1408 0 1093 0 704C0 315 315 0 704 0C846 0 986 43 1103 124L1446 -218C1469 -242 1502 -256 1536 -256C1606 -256 1664 -198 1664 -128Z"/></svg></span></div><table id="tbl"><colgroup><col style="width:36px"><col style="width:72px"><col style="width:174px"><col style="width:80px"><col style="width:80px"><col style="width:200px"><col style="width:79px"><col style="width:80px"><col style="width:166px"><col style="width:97px"><col style="width:159px"><col style="width:159px"><col style="width:159px"><col style="width:79px"><col style="width:65px"></colgroup><thead><tr><th><span class="cb"></span></th><th>操作</th><th>订单id</th><th>用户名称</th><th>用户等级</th><th>商品名称</th><th>商品数量</th><th>订单金额</th><th>佣金</th><th>订单状态</th><th class="so">指派时间<svg width="8" height="16" viewBox="0 0 8 16"><path d="M4 0L8 6.5H0z" fill="#d2d2d2"/><path d="M4 15.5L8 9H0z" fill="#d2d2d2"/></svg></th><th class="so">完成时间<svg width="8" height="16" viewBox="0 0 8 16"><path d="M4 0L8 6.5H0z" fill="#d2d2d2"/><path d="M4 15.5L8 9H0z" fill="#d2d2d2"/></svg></th><th class="so">订单有效时间<svg width="8" height="16" viewBox="0 0 8 16"><path d="M4 0L8 6.5H0z" fill="#d2d2d2"/><path d="M4 15.5L8 9H0z" fill="#d2d2d2"/></svg></th><th>佣金状态</th><th>操作员</th></tr></thead><tbody><tr class="hov"><td><span class="cb"></span></td><td><span class="xs b-suc"><svg class="fa" style="width:10.29px;height:12px;" viewBox="0 -1536 1536 1792"><path transform="scale(1,-1)" d="M363 0H256V128H128V235L219 326L454 91ZM886 928C886 922 884 916 879 911L337 369C332 364 326 362 320 362C307 362 298 371 298 384C298 390 300 396 305 401L847 943C852 948 858 950 864 950C877 950 886 941 886 928ZM832 1120 0 288V-128H416L1248 704ZM1515 1024C1515 1058 1501 1091 1478 1115L1243 1349C1219 1373 1186 1387 1152 1387C1118 1387 1085 1373 1062 1349L896 1184L1312 768L1478 934C1501 957 1515 990 1515 1024Z"/></svg></span><span class="xs b-dan"><svg class="fa" style="width:9.43px;height:12px;" viewBox="0 -1536 1408 1792"><path transform="scale(1,-1)" d="M512 160C512 142 498 128 480 128H416C398 128 384 142 384 160V864C384 882 398 896 416 896H480C498 896 512 882 512 864V160ZM768 160C768 142 754 128 736 128H672C654 128 640 142 640 160V864C640 882 654 896 672 896H736C754 896 768 882 768 864V160ZM1024 160C1024 142 1010 128 992 128H928C910 128 896 142 896 160V864C896 882 910 896 928 896H992C1010 896 1024 882 1024 864V160ZM480 1152 529 1269C532 1273 540 1279 546 1280H863C868 1279 877 1273 880 1269L928 1152ZM1408 1120C1408 1138 1394 1152 1376 1152H1067L997 1319C977 1368 917 1408 864 1408H544C491 1408 431 1368 411 1319L341 1152H32C14 1152 0 1138 0 1120V1056C0 1038 14 1024 32 1024H128V72C128 -38 200 -128 288 -128H1120C1208 -128 1280 -34 1280 76V1024H1376C1394 1024 1408 1038 1408 1056Z"/></svg></span></td><td>UB2512141039103630</td><td>112233</td><td>Lv 1</td><td class="nm">M5Stack Cardputer Kit with …</td><td>1</td><td>990</td><td>5.84</td><td><span class="suc"><i class="dot"></i>交易完成</span></td><td>2025-12-14 10:39:10</td><td>2025-12-14 10:39:11</td><td>2025-12-14 10:39:11</td><td><span class="lab lw">已发放</span></td><td>-</td></tr><tr><td><span class="cb"></span></td><td><span class="xs b-suc"><svg class="fa" style="width:10.29px;height:12px;" viewBox="0 -1536 1536 1792"><path transform="scale(1,-1)" d="M363 0H256V128H128V235L219 326L454 91ZM886 928C886 922 884 916 879 911L337 369C332 364 326 362 320 362C307 362 298 371 298 384C298 390 300 396 305 401L847 943C852 948 858 950 864 950C877 950 886 941 886 928ZM832 1120 0 288V-128H416L1248 704ZM1515 1024C1515 1058 1501 1091 1478 1115L1243 1349C1219 1373 1186 1387 1152 1387C1118 1387 1085 1373 1062 1349L896 1184L1312 768L1478 934C1501 957 1515 990 1515 1024Z"/></svg></span><span class="xs b-dan"><svg class="fa" style="width:9.43px;height:12px;" viewBox="0 -1536 1408 1792"><path transform="scale(1,-1)" d="M512 160C512 142 498 128 480 128H416C398 128 384 142 384 160V864C384 882 398 896 416 896H480C498 896 512 882 512 864V160ZM768 160C768 142 754 128 736 128H672C654 128 640 142 640 160V864C640 882 654 896 672 896H736C754 896 768 882 768 864V160ZM1024 160C1024 142 1010 128 992 128H928C910 128 896 142 896 160V864C896 882 910 896 928 896H992C1010 896 1024 882 1024 864V160ZM480 1152 529 1269C532 1273 540 1279 546 1280H863C868 1279 877 1273 880 1269L928 1152ZM1408 1120C1408 1138 1394 1152 1376 1152H1067L997 1319C977 1368 917 1408 864 1408H544C491 1408 431 1368 411 1319L341 1152H32C14 1152 0 1138 0 1120V1056C0 1038 14 1024 32 1024H128V72C128 -38 200 -128 288 -128H1120C1208 -128 1280 -34 1280 76V1024H1376C1394 1024 1408 1038 1408 1056Z"/></svg></span></td><td>UB2512141034346038</td><td>456456</td><td>Lv 1</td><td class="nm">PC MINI DELL OPTIPLEX 7…</td><td>1</td><td>1337.37</td><td>133.73</td><td><span class="pri"><i class="dot"></i>待付款</span></td><td>2025-12-14 10:34:34</td><td>无</td><td>2026-02-21 21:14:34</td><td><span class="lab ls">未发放</span></td><td>-</td></tr><tr><td><span class="cb"></span></td><td><span class="xs b-suc"><svg class="fa" style="width:10.29px;height:12px;" viewBox="0 -1536 1536 1792"><path transform="scale(1,-1)" d="M363 0H256V128H128V235L219 326L454 91ZM886 928C886 922 884 916 879 911L337 369C332 364 326 362 320 362C307 362 298 371 298 384C298 390 300 396 305 401L847 943C852 948 858 950 864 950C877 950 886 941 886 928ZM832 1120 0 288V-128H416L1248 704ZM1515 1024C1515 1058 1501 1091 1478 1115L1243 1349C1219 1373 1186 1387 1152 1387C1118 1387 1085 1373 1062 1349L896 1184L1312 768L1478 934C1501 957 1515 990 1515 1024Z"/></svg></span><span class="xs b-dan"><svg class="fa" style="width:9.43px;height:12px;" viewBox="0 -1536 1408 1792"><path transform="scale(1,-1)" d="M512 160C512 142 498 128 480 128H416C398 128 384 142 384 160V864C384 882 398 896 416 896H480C498 896 512 882 512 864V160ZM768 160C768 142 754 128 736 128H672C654 128 640 142 640 160V864C640 882 654 896 672 896H736C754 896 768 882 768 864V160ZM1024 160C1024 142 1010 128 992 128H928C910 128 896 142 896 160V864C896 882 910 896 928 896H992C1010 896 1024 882 1024 864V160ZM480 1152 529 1269C532 1273 540 1279 546 1280H863C868 1279 877 1273 880 1269L928 1152ZM1408 1120C1408 1138 1394 1152 1376 1152H1067L997 1319C977 1368 917 1408 864 1408H544C491 1408 431 1368 411 1319L341 1152H32C14 1152 0 1138 0 1120V1056C0 1038 14 1024 32 1024H128V72C128 -38 200 -128 288 -128H1120C1208 -128 1280 -34 1280 76V1024H1376C1394 1024 1408 1038 1408 1056Z"/></svg></span></td><td>UB2512141033575713</td><td>456456</td><td>Lv 1</td><td class="nm">ZERO GRAVITY 1/100 MOO…</td><td>1</td><td>1200</td><td>7.08</td><td><span class="suc"><i class="dot"></i>交易完成</span></td><td>2025-12-14 10:33:57</td><td>2025-12-14 10:34:18</td><td>2025-12-14 10:34:18</td><td><span class="lab lw">已发放</span></td><td>-</td></tr><tr><td><span class="cb"></span></td><td><span class="xs b-suc"><svg class="fa" style="width:10.29px;height:12px;" viewBox="0 -1536 1536 1792"><path transform="scale(1,-1)" d="M363 0H256V128H128V235L219 326L454 91ZM886 928C886 922 884 916 879 911L337 369C332 364 326 362 320 362C307 362 298 371 298 384C298 390 300 396 305 401L847 943C852 948 858 950 864 950C877 950 886 941 886 928ZM832 1120 0 288V-128H416L1248 704ZM1515 1024C1515 1058 1501 1091 1478 1115L1243 1349C1219 1373 1186 1387 1152 1387C1118 1387 1085 1373 1062 1349L896 1184L1312 768L1478 934C1501 957 1515 990 1515 1024Z"/></svg></span><span class="xs b-dan"><svg class="fa" style="width:9.43px;height:12px;" viewBox="0 -1536 1408 1792"><path transform="scale(1,-1)" d="M512 160C512 142 498 128 480 128H416C398 128 384 142 384 160V864C384 882 398 896 416 896H480C498 896 512 882 512 864V160ZM768 160C768 142 754 128 736 128H672C654 128 640 142 640 160V864C640 882 654 896 672 896H736C754 896 768 882 768 864V160ZM1024 160C1024 142 1010 128 992 128H928C910 128 896 142 896 160V864C896 882 910 896 928 896H992C1010 896 1024 882 1024 864V160ZM480 1152 529 1269C532 1273 540 1279 546 1280H863C868 1279 877 1273 880 1269L928 1152ZM1408 1120C1408 1138 1394 1152 1376 1152H1067L997 1319C977 1368 917 1408 864 1408H544C491 1408 431 1368 411 1319L341 1152H32C14 1152 0 1138 0 1120V1056C0 1038 14 1024 32 1024H128V72C128 -38 200 -128 288 -128H1120C1208 -128 1280 -34 1280 76V1024H1376C1394 1024 1408 1038 1408 1056Z"/></svg></span></td><td>UB2512141028584500</td><td>456456</td><td>Lv 1</td><td class="nm">Raspberry Pi 4 Model B Ram…</td><td>1</td><td>1190</td><td>7.02</td><td><span class="suc"><i class="dot"></i>交易完成</span></td><td>2025-12-14 10:28:58</td><td>2025-12-14 10:28:59</td><td>2025-12-14 10:28:59</td><td><span class="lab lw">已发放</span></td><td>-</td></tr><tr><td><span class="cb"></span></td><td><span class="xs b-suc"><svg class="fa" style="width:10.29px;height:12px;" viewBox="0 -1536 1536 1792"><path transform="scale(1,-1)" d="M363 0H256V128H128V235L219 326L454 91ZM886 928C886 922 884 916 879 911L337 369C332 364 326 362 320 362C307 362 298 371 298 384C298 390 300 396 305 401L847 943C852 948 858 950 864 950C877 950 886 941 886 928ZM832 1120 0 288V-128H416L1248 704ZM1515 1024C1515 1058 1501 1091 1478 1115L1243 1349C1219 1373 1186 1387 1152 1387C1118 1387 1085 1373 1062 1349L896 1184L1312 768L1478 934C1501 957 1515 990 1515 1024Z"/></svg></span><span class="xs b-dan"><svg class="fa" style="width:9.43px;height:12px;" viewBox="0 -1536 1408 1792"><path transform="scale(1,-1)" d="M512 160C512 142 498 128 480 128H416C398 128 384 142 384 160V864C384 882 398 896 416 896H480C498 896 512 882 512 864V160ZM768 160C768 142 754 128 736 128H672C654 128 640 142 640 160V864C640 882 654 896 672 896H736C754 896 768 882 768 864V160ZM1024 160C1024 142 1010 128 992 128H928C910 128 896 142 896 160V864C896 882 910 896 928 896H992C1010 896 1024 882 1024 864V160ZM480 1152 529 1269C532 1273 540 1279 546 1280H863C868 1279 877 1273 880 1269L928 1152ZM1408 1120C1408 1138 1394 1152 1376 1152H1067L997 1319C977 1368 917 1408 864 1408H544C491 1408 431 1368 411 1319L341 1152H32C14 1152 0 1138 0 1120V1056C0 1038 14 1024 32 1024H128V72C128 -38 200 -128 288 -128H1120C1208 -128 1280 -34 1280 76V1024H1376C1394 1024 1408 1038 1408 1056Z"/></svg></span></td><td>UB2512141028572010</td><td>456456</td><td>Lv 1</td><td class="nm">Raspberry Pi 4 Model B Ram…</td><td>1</td><td>1190</td><td>7.02</td><td><span class="suc"><i class="dot"></i>交易完成</span></td><td>2025-12-14 10:28:57</td><td>2025-12-14 10:28:57</td><td>2025-12-14 10:28:57</td><td><span class="lab lw">已发放</span></td><td>-</td></tr><tr><td><span class="cb"></span></td><td><span class="xs b-suc"><svg class="fa" style="width:10.29px;height:12px;" viewBox="0 -1536 1536 1792"><path transform="scale(1,-1)" d="M363 0H256V128H128V235L219 326L454 91ZM886 928C886 922 884 916 879 911L337 369C332 364 326 362 320 362C307 362 298 371 298 384C298 390 300 396 305 401L847 943C852 948 858 950 864 950C877 950 886 941 886 928ZM832 1120 0 288V-128H416L1248 704ZM1515 1024C1515 1058 1501 1091 1478 1115L1243 1349C1219 1373 1186 1387 1152 1387C1118 1387 1085 1373 1062 1349L896 1184L1312 768L1478 934C1501 957 1515 990 1515 1024Z"/></svg></span><span class="xs b-dan"><svg class="fa" style="width:9.43px;height:12px;" viewBox="0 -1536 1408 1792"><path transform="scale(1,-1)" d="M512 160C512 142 498 128 480 128H416C398 128 384 142 384 160V864C384 882 398 896 416 896H480C498 896 512 882 512 864V160ZM768 160C768 142 754 128 736 128H672C654 128 640 142 640 160V864C640 882 654 896 672 896H736C754 896 768 882 768 864V160ZM1024 160C1024 142 1010 128 992 128H928C910 128 896 142 896 160V864C896 882 910 896 928 896H992C1010 896 1024 882 1024 864V160ZM480 1152 529 1269C532 1273 540 1279 546 1280H863C868 1279 877 1273 880 1269L928 1152ZM1408 1120C1408 1138 1394 1152 1376 1152H1067L997 1319C977 1368 917 1408 864 1408H544C491 1408 431 1368 411 1319L341 1152H32C14 1152 0 1138 0 1120V1056C0 1038 14 1024 32 1024H128V72C128 -38 200 -128 288 -128H1120C1208 -128 1280 -34 1280 76V1024H1376C1394 1024 1408 1038 1408 1056Z"/></svg></span></td><td>UB2512141028288362</td><td>456456</td><td>Lv 1</td><td class="nm">PC MINI LENOVO THINKCE…</td><td>1</td><td>1105.69</td><td>110.56</td><td><span class="suc"><i class="dot"></i>交易完成</span></td><td>2025-12-14 10:28:28</td><td>2025-12-14 10:28:50</td><td>2025-12-14 10:28:50</td><td><span class="lab lw">已发放</span></td><td>-</td></tr><tr><td><span class="cb"></span></td><td><span class="xs b-suc"><svg class="fa" style="width:10.29px;height:12px;" viewBox="0 -1536 1536 1792"><path transform="scale(1,-1)" d="M363 0H256V128H128V235L219 326L454 91ZM886 928C886 922 884 916 879 911L337 369C332 364 326 362 320 362C307 362 298 371 298 384C298 390 300 396 305 401L847 943C852 948 858 950 864 950C877 950 886 941 886 928ZM832 1120 0 288V-128H416L1248 704ZM1515 1024C1515 1058 1501 1091 1478 1115L1243 1349C1219 1373 1186 1387 1152 1387C1118 1387 1085 1373 1062 1349L896 1184L1312 768L1478 934C1501 957 1515 990 1515 1024Z"/></svg></span><span class="xs b-dan"><svg class="fa" style="width:9.43px;height:12px;" viewBox="0 -1536 1408 1792"><path transform="scale(1,-1)" d="M512 160C512 142 498 128 480 128H416C398 128 384 142 384 160V864C384 882 398 896 416 896H480C498 896 512 882 512 864V160ZM768 160C768 142 754 128 736 128H672C654 128 640 142 640 160V864C640 882 654 896 672 896H736C754 896 768 882 768 864V160ZM1024 160C1024 142 1010 128 992 128H928C910 128 896 142 896 160V864C896 882 910 896 928 896H992C1010 896 1024 882 1024 864V160ZM480 1152 529 1269C532 1273 540 1279 546 1280H863C868 1279 877 1273 880 1269L928 1152ZM1408 1120C1408 1138 1394 1152 1376 1152H1067L997 1319C977 1368 917 1408 864 1408H544C491 1408 431 1368 411 1319L341 1152H32C14 1152 0 1138 0 1120V1056C0 1038 14 1024 32 1024H128V72C128 -38 200 -128 288 -128H1120C1208 -128 1280 -34 1280 76V1024H1376C1394 1024 1408 1038 1408 1056Z"/></svg></span></td><td>UB2512141028269742</td><td>456456</td><td>Lv 1</td><td class="nm">PC Rakitan Core i5/CPU Cor…</td><td>1</td><td>965</td><td>5.6899999999999995</td><td><span class="suc"><i class="dot"></i>交易完成</span></td><td>2025-12-14 10:28:26</td><td>2025-12-14 10:28:27</td><td>2025-12-14 10:28:27</td><td><span class="lab lw">已发放</span></td><td>-</td></tr><tr><td><span class="cb"></span></td><td><span class="xs b-suc"><svg class="fa" style="width:10.29px;height:12px;" viewBox="0 -1536 1536 1792"><path transform="scale(1,-1)" d="M363 0H256V128H128V235L219 326L454 91ZM886 928C886 922 884 916 879 911L337 369C332 364 326 362 320 362C307 362 298 371 298 384C298 390 300 396 305 401L847 943C852 948 858 950 864 950C877 950 886 941 886 928ZM832 1120 0 288V-128H416L1248 704ZM1515 1024C1515 1058 1501 1091 1478 1115L1243 1349C1219 1373 1186 1387 1152 1387C1118 1387 1085 1373 1062 1349L896 1184L1312 768L1478 934C1501 957 1515 990 1515 1024Z"/></svg></span><span class="xs b-dan"><svg class="fa" style="width:9.43px;height:12px;" viewBox="0 -1536 1408 1792"><path transform="scale(1,-1)" d="M512 160C512 142 498 128 480 128H416C398 128 384 142 384 160V864C384 882 398 896 416 896H480C498 896 512 882 512 864V160ZM768 160C768 142 754 128 736 128H672C654 128 640 142 640 160V864C640 882 654 896 672 896H736C754 896 768 882 768 864V160ZM1024 160C1024 142 1010 128 992 128H928C910 128 896 142 896 160V864C896 882 910 896 928 896H992C1010 896 1024 882 1024 864V160ZM480 1152 529 1269C532 1273 540 1279 546 1280H863C868 1279 877 1273 880 1269L928 1152ZM1408 1120C1408 1138 1394 1152 1376 1152H1067L997 1319C977 1368 917 1408 864 1408H544C491 1408 431 1368 411 1319L341 1152H32C14 1152 0 1138 0 1120V1056C0 1038 14 1024 32 1024H128V72C128 -38 200 -128 288 -128H1120C1208 -128 1280 -34 1280 76V1024H1376C1394 1024 1408 1038 1408 1056Z"/></svg></span></td><td>UB2512141026292201</td><td>789789</td><td>Lv 1</td><td>mini pc dell 3050 i3 gen7</td><td>1</td><td>1200</td><td>7.08</td><td><span class="suc"><i class="dot"></i>交易完成</span></td><td>2025-12-14 10:26:29</td><td>2025-12-14 10:26:30</td><td>2025-12-14 10:26:30</td><td><span class="lab lw">已发放</span></td><td>-</td></tr><tr><td><span class="cb"></span></td><td><span class="xs b-suc"><svg class="fa" style="width:10.29px;height:12px;" viewBox="0 -1536 1536 1792"><path transform="scale(1,-1)" d="M363 0H256V128H128V235L219 326L454 91ZM886 928C886 922 884 916 879 911L337 369C332 364 326 362 320 362C307 362 298 371 298 384C298 390 300 396 305 401L847 943C852 948 858 950 864 950C877 950 886 941 886 928ZM832 1120 0 288V-128H416L1248 704ZM1515 1024C1515 1058 1501 1091 1478 1115L1243 1349C1219 1373 1186 1387 1152 1387C1118 1387 1085 1373 1062 1349L896 1184L1312 768L1478 934C1501 957 1515 990 1515 1024Z"/></svg></span><span class="xs b-dan"><svg class="fa" style="width:9.43px;height:12px;" viewBox="0 -1536 1408 1792"><path transform="scale(1,-1)" d="M512 160C512 142 498 128 480 128H416C398 128 384 142 384 160V864C384 882 398 896 416 896H480C498 896 512 882 512 864V160ZM768 160C768 142 754 128 736 128H672C654 128 640 142 640 160V864C640 882 654 896 672 896H736C754 896 768 882 768 864V160ZM1024 160C1024 142 1010 128 992 128H928C910 128 896 142 896 160V864C896 882 910 896 928 896H992C1010 896 1024 882 1024 864V160ZM480 1152 529 1269C532 1273 540 1279 546 1280H863C868 1279 877 1273 880 1269L928 1152ZM1408 1120C1408 1138 1394 1152 1376 1152H1067L997 1319C977 1368 917 1408 864 1408H544C491 1408 431 1368 411 1319L341 1152H32C14 1152 0 1138 0 1120V1056C0 1038 14 1024 32 1024H128V72C128 -38 200 -128 288 -128H1120C1208 -128 1280 -34 1280 76V1024H1376C1394 1024 1408 1038 1408 1056Z"/></svg></span></td><td>UB2512141026285708</td><td>789789</td><td>Lv 1</td><td class="nm">CPU PC RAKITAN CORE I5 …</td><td>1</td><td>1200</td><td>7.08</td><td><span class="suc"><i class="dot"></i>交易完成</span></td><td>2025-12-14 10:26:28</td><td>2025-12-14 10:26:28</td><td>2025-12-14 10:26:28</td><td><span class="lab lw">已发放</span></td><td>-</td></tr><tr><td><span class="cb"></span></td><td><span class="xs b-suc"><svg class="fa" style="width:10.29px;height:12px;" viewBox="0 -1536 1536 1792"><path transform="scale(1,-1)" d="M363 0H256V128H128V235L219 326L454 91ZM886 928C886 922 884 916 879 911L337 369C332 364 326 362 320 362C307 362 298 371 298 384C298 390 300 396 305 401L847 943C852 948 858 950 864 950C877 950 886 941 886 928ZM832 1120 0 288V-128H416L1248 704ZM1515 1024C1515 1058 1501 1091 1478 1115L1243 1349C1219 1373 1186 1387 1152 1387C1118 1387 1085 1373 1062 1349L896 1184L1312 768L1478 934C1501 957 1515 990 1515 1024Z"/></svg></span><span class="xs b-dan"><svg class="fa" style="width:9.43px;height:12px;" viewBox="0 -1536 1408 1792"><path transform="scale(1,-1)" d="M512 160C512 142 498 128 480 128H416C398 128 384 142 384 160V864C384 882 398 896 416 896H480C498 896 512 882 512 864V160ZM768 160C768 142 754 128 736 128H672C654 128 640 142 640 160V864C640 882 654 896 672 896H736C754 896 768 882 768 864V160ZM1024 160C1024 142 1010 128 992 128H928C910 128 896 142 896 160V864C896 882 910 896 928 896H992C1010 896 1024 882 1024 864V160ZM480 1152 529 1269C532 1273 540 1279 546 1280H863C868 1279 877 1273 880 1269L928 1152ZM1408 1120C1408 1138 1394 1152 1376 1152H1067L997 1319C977 1368 917 1408 864 1408H544C491 1408 431 1368 411 1319L341 1152H32C14 1152 0 1138 0 1120V1056C0 1038 14 1024 32 1024H128V72C128 -38 200 -128 288 -128H1120C1208 -128 1280 -34 1280 76V1024H1376C1394 1024 1408 1038 1408 1056Z"/></svg></span></td><td>UB2512141026272186</td><td>789789</td><td>Lv 1</td><td class="nm">PC MINI DELL OPTIPLEX 7…</td><td>1</td><td>1200</td><td>7.08</td><td><span class="suc"><i class="dot"></i>交易完成</span></td><td>2025-12-14 10:26:27</td><td>2025-12-14 10:26:27</td><td>2025-12-14 10:26:27</td><td><span class="lab lw">已发放</span></td><td>-</td></tr><tr><td><span class="cb"></span></td><td><span class="xs b-suc"><svg class="fa" style="width:10.29px;height:12px;" viewBox="0 -1536 1536 1792"><path transform="scale(1,-1)" d="M363 0H256V128H128V235L219 326L454 91ZM886 928C886 922 884 916 879 911L337 369C332 364 326 362 320 362C307 362 298 371 298 384C298 390 300 396 305 401L847 943C852 948 858 950 864 950C877 950 886 941 886 928ZM832 1120 0 288V-128H416L1248 704ZM1515 1024C1515 1058 1501 1091 1478 1115L1243 1349C1219 1373 1186 1387 1152 1387C1118 1387 1085 1373 1062 1349L896 1184L1312 768L1478 934C1501 957 1515 990 1515 1024Z"/></svg></span><span class="xs b-dan"><svg class="fa" style="width:9.43px;height:12px;" viewBox="0 -1536 1408 1792"><path transform="scale(1,-1)" d="M512 160C512 142 498 128 480 128H416C398 128 384 142 384 160V864C384 882 398 896 416 896H480C498 896 512 882 512 864V160ZM768 160C768 142 754 128 736 128H672C654 128 640 142 640 160V864C640 882 654 896 672 896H736C754 896 768 882 768 864V160ZM1024 160C1024 142 1010 128 992 128H928C910 128 896 142 896 160V864C896 882 910 896 928 896H992C1010 896 1024 882 1024 864V160ZM480 1152 529 1269C532 1273 540 1279 546 1280H863C868 1279 877 1273 880 1269L928 1152ZM1408 1120C1408 1138 1394 1152 1376 1152H1067L997 1319C977 1368 917 1408 864 1408H544C491 1408 431 1368 411 1319L341 1152H32C14 1152 0 1138 0 1120V1056C0 1038 14 1024 32 1024H128V72C128 -38 200 -128 288 -128H1120C1208 -128 1280 -34 1280 76V1024H1376C1394 1024 1408 1038 1408 1056Z"/></svg></span></td><td>UB2512141026267753</td><td>789789</td><td>Lv 1</td><td class="nm">CPU PC RAKITAN CORE I5 …</td><td>1</td><td>1200</td><td>7.08</td><td><span class="suc"><i class="dot"></i>交易完成</span></td><td>2025-12-14 10:26:26</td><td>2025-12-14 10:26:26</td><td>2025-12-14 10:26:26</td><td><span class="lab lw">已发放</span></td><td>-</td></tr><tr><td><span class="cb"></span></td><td><span class="xs b-suc"><svg class="fa" style="width:10.29px;height:12px;" viewBox="0 -1536 1536 1792"><path transform="scale(1,-1)" d="M363 0H256V128H128V235L219 326L454 91ZM886 928C886 922 884 916 879 911L337 369C332 364 326 362 320 362C307 362 298 371 298 384C298 390 300 396 305 401L847 943C852 948 858 950 864 950C877 950 886 941 886 928ZM832 1120 0 288V-128H416L1248 704ZM1515 1024C1515 1058 1501 1091 1478 1115L1243 1349C1219 1373 1186 1387 1152 1387C1118 1387 1085 1373 1062 1349L896 1184L1312 768L1478 934C1501 957 1515 990 1515 1024Z"/></svg></span><span class="xs b-dan"><svg class="fa" style="width:9.43px;height:12px;" viewBox="0 -1536 1408 1792"><path transform="scale(1,-1)" d="M512 160C512 142 498 128 480 128H416C398 128 384 142 384 160V864C384 882 398 896 416 896H480C498 896 512 882 512 864V160ZM768 160C768 142 754 128 736 128H672C654 128 640 142 640 160V864C640 882 654 896 672 896H736C754 896 768 882 768 864V160ZM1024 160C1024 142 1010 128 992 128H928C910 128 896 142 896 160V864C896 882 910 896 928 896H992C1010 896 1024 882 1024 864V160ZM480 1152 529 1269C532 1273 540 1279 546 1280H863C868 1279 877 1273 880 1269L928 1152ZM1408 1120C1408 1138 1394 1152 1376 1152H1067L997 1319C977 1368 917 1408 864 1408H544C491 1408 431 1368 411 1319L341 1152H32C14 1152 0 1138 0 1120V1056C0 1038 14 1024 32 1024H128V72C128 -38 200 -128 288 -128H1120C1208 -128 1280 -34 1280 76V1024H1376C1394 1024 1408 1038 1408 1056Z"/></svg></span></td><td>UB2512141026246875</td><td>789789</td><td>Lv 1</td><td class="nm">PC Rakitan Core i5 + Monitor…</td><td>1</td><td>1199</td><td>7.07</td><td><span class="suc"><i class="dot"></i>交易完成</span></td><td>2025-12-14 10:26:24</td><td>2025-12-14 10:26:25</td><td>2025-12-14 10:26:25</td><td><span class="lab lw">已发放</span></td><td>-</td></tr><tr><td><span class="cb"></span></td><td><span class="xs b-suc"><svg class="fa" style="width:10.29px;height:12px;" viewBox="0 -1536 1536 1792"><path transform="scale(1,-1)" d="M363 0H256V128H128V235L219 326L454 91ZM886 928C886 922 884 916 879 911L337 369C332 364 326 362 320 362C307 362 298 371 298 384C298 390 300 396 305 401L847 943C852 948 858 950 864 950C877 950 886 941 886 928ZM832 1120 0 288V-128H416L1248 704ZM1515 1024C1515 1058 1501 1091 1478 1115L1243 1349C1219 1373 1186 1387 1152 1387C1118 1387 1085 1373 1062 1349L896 1184L1312 768L1478 934C1501 957 1515 990 1515 1024Z"/></svg></span><span class="xs b-dan"><svg class="fa" style="width:9.43px;height:12px;" viewBox="0 -1536 1408 1792"><path transform="scale(1,-1)" d="M512 160C512 142 498 128 480 128H416C398 128 384 142 384 160V864C384 882 398 896 416 896H480C498 896 512 882 512 864V160ZM768 160C768 142 754 128 736 128H672C654 128 640 142 640 160V864C640 882 654 896 672 896H736C754 896 768 882 768 864V160ZM1024 160C1024 142 1010 128 992 128H928C910 128 896 142 896 160V864C896 882 910 896 928 896H992C1010 896 1024 882 1024 864V160ZM480 1152 529 1269C532 1273 540 1279 546 1280H863C868 1279 877 1273 880 1269L928 1152ZM1408 1120C1408 1138 1394 1152 1376 1152H1067L997 1319C977 1368 917 1408 864 1408H544C491 1408 431 1368 411 1319L341 1152H32C14 1152 0 1138 0 1120V1056C0 1038 14 1024 32 1024H128V72C128 -38 200 -128 288 -128H1120C1208 -128 1280 -34 1280 76V1024H1376C1394 1024 1408 1038 1408 1056Z"/></svg></span></td><td>UB2512141026239232</td><td>789789</td><td>Lv 1</td><td class="nm">CPU PC RAKITAN CORE I5 …</td><td>1</td><td>1200</td><td>7.08</td><td><span class="suc"><i class="dot"></i>交易完成</span></td><td>2025-12-14 10:26:23</td><td>2025-12-14 10:26:24</td><td>2025-12-14 10:26:24</td><td><span class="lab lw">已发放</span></td><td>-</td></tr><tr><td><span class="cb"></span></td><td><span class="xs b-suc"><svg class="fa" style="width:10.29px;height:12px;" viewBox="0 -1536 1536 1792"><path transform="scale(1,-1)" d="M363 0H256V128H128V235L219 326L454 91ZM886 928C886 922 884 916 879 911L337 369C332 364 326 362 320 362C307 362 298 371 298 384C298 390 300 396 305 401L847 943C852 948 858 950 864 950C877 950 886 941 886 928ZM832 1120 0 288V-128H416L1248 704ZM1515 1024C1515 1058 1501 1091 1478 1115L1243 1349C1219 1373 1186 1387 1152 1387C1118 1387 1085 1373 1062 1349L896 1184L1312 768L1478 934C1501 957 1515 990 1515 1024Z"/></svg></span><span class="xs b-dan"><svg class="fa" style="width:9.43px;height:12px;" viewBox="0 -1536 1408 1792"><path transform="scale(1,-1)" d="M512 160C512 142 498 128 480 128H416C398 128 384 142 384 160V864C384 882 398 896 416 896H480C498 896 512 882 512 864V160ZM768 160C768 142 754 128 736 128H672C654 128 640 142 640 160V864C640 882 654 896 672 896H736C754 896 768 882 768 864V160ZM1024 160C1024 142 1010 128 992 128H928C910 128 896 142 896 160V864C896 882 910 896 928 896H992C1010 896 1024 882 1024 864V160ZM480 1152 529 1269C532 1273 540 1279 546 1280H863C868 1279 877 1273 880 1269L928 1152ZM1408 1120C1408 1138 1394 1152 1376 1152H1067L997 1319C977 1368 917 1408 864 1408H544C491 1408 431 1368 411 1319L341 1152H32C14 1152 0 1138 0 1120V1056C0 1038 14 1024 32 1024H128V72C128 -38 200 -128 288 -128H1120C1208 -128 1280 -34 1280 76V1024H1376C1394 1024 1408 1038 1408 1056Z"/></svg></span></td><td>UB2512141026229040</td><td>789789</td><td>Lv 1</td><td>mini pc dell 3050 i3 gen7</td><td>1</td><td>1200</td><td>7.08</td><td><span class="suc"><i class="dot"></i>交易完成</span></td><td>2025-12-14 10:26:22</td><td>2025-12-14 10:26:23</td><td>2025-12-14 10:26:23</td><td><span class="lab lw">已发放</span></td><td>-</td></tr><tr><td><span class="cb"></span></td><td><span class="xs b-suc"><svg class="fa" style="width:10.29px;height:12px;" viewBox="0 -1536 1536 1792"><path transform="scale(1,-1)" d="M363 0H256V128H128V235L219 326L454 91ZM886 928C886 922 884 916 879 911L337 369C332 364 326 362 320 362C307 362 298 371 298 384C298 390 300 396 305 401L847 943C852 948 858 950 864 950C877 950 886 941 886 928ZM832 1120 0 288V-128H416L1248 704ZM1515 1024C1515 1058 1501 1091 1478 1115L1243 1349C1219 1373 1186 1387 1152 1387C1118 1387 1085 1373 1062 1349L896 1184L1312 768L1478 934C1501 957 1515 990 1515 1024Z"/></svg></span><span class="xs b-dan"><svg class="fa" style="width:9.43px;height:12px;" viewBox="0 -1536 1408 1792"><path transform="scale(1,-1)" d="M512 160C512 142 498 128 480 128H416C398 128 384 142 384 160V864C384 882 398 896 416 896H480C498 896 512 882 512 864V160ZM768 160C768 142 754 128 736 128H672C654 128 640 142 640 160V864C640 882 654 896 672 896H736C754 896 768 882 768 864V160ZM1024 160C1024 142 1010 128 992 128H928C910 128 896 142 896 160V864C896 882 910 896 928 896H992C1010 896 1024 882 1024 864V160ZM480 1152 529 1269C532 1273 540 1279 546 1280H863C868 1279 877 1273 880 1269L928 1152ZM1408 1120C1408 1138 1394 1152 1376 1152H1067L997 1319C977 1368 917 1408 864 1408H544C491 1408 431 1368 411 1319L341 1152H32C14 1152 0 1138 0 1120V1056C0 1038 14 1024 32 1024H128V72C128 -38 200 -128 288 -128H1120C1208 -128 1280 -34 1280 76V1024H1376C1394 1024 1408 1038 1408 1056Z"/></svg></span></td><td>UB2512141026219345</td><td>789789</td><td>Lv 1</td><td class="nm">Jurassic World Dino Trackers…</td><td>1</td><td>1169.9</td><td>6.9</td><td><span class="suc"><i class="dot"></i>交易完成</span></td><td>2025-12-14 10:26:21</td><td>2025-12-14 10:26:22</td><td>2025-12-14 10:26:22</td><td><span class="lab lw">已发放</span></td><td>-</td></tr></tbody></table><div id="pinfo">显示第 1 到第 15 条记录，总共 47 条记录 每页显示<span class="btn b-def">15<i class="caret-up"></i></span>条记录</div><div id="pg"><a>上一页</a><a class="on">1</a><a>2</a><a>3</a><a>4</a><a>下一页</a></div><div id="jin"></div><div id="jbt">跳转</div></div><svg id="stamp" viewBox="0 0 300 300" fill="#f00" font-family="Liberation Mono, monospace"><circle cx="150.4" cy="149.7" r="139.2" fill="none" stroke="#f00" stroke-width="5.6"/><text font-size="28"  x="46.4 42.5 47.0 57.2 78.2 103.1 131.6 161.5 190.6 213.9 237.5 251.7 258.0" y="178.3 148.6 119.0 95.3 69.5 52.7 43.4 42.3 49.6 62.5 86.0 112.4 141.8" rotate="-101.4 -85.4 -69.5 -55.3 -37.5 -21.5 -5.6 10.4 26.4 40.5 58.3 74.3 90.2"><tspan font-size="25" font-weight="bold">www</tspan>.515ym.com</text><text font-size="14" font-style="italic" x="86.6 100.1 114.3 129.0 143.9 157.1 173.9 188.5 202.6" y="263.6 270.2 275.2 278.5 280.1 280.1 278.1 274.6 269.4" rotate="27.4 20.8 14.2 7.6 1.0 -4.8 -12.2 -18.8 -25.4">515ym.com</text><text x="76.8" y="162.6" font-family="Liberation Sans, sans-serif" font-size="36.5" textLength="66" lengthAdjust="spacingAndGlyphs">515</text><text x="146.5" y="163" font-family="Noto Serif CJK SC, serif" font-weight="bold" font-style="italic" font-size="37.5">源码</text><text x="75.6" y="229.5" font-weight="bold" font-size="29" letter-spacing="-0.6">515ym.com</text></svg><div id="cbl"></div><div id="cbr"></div></body></html>
